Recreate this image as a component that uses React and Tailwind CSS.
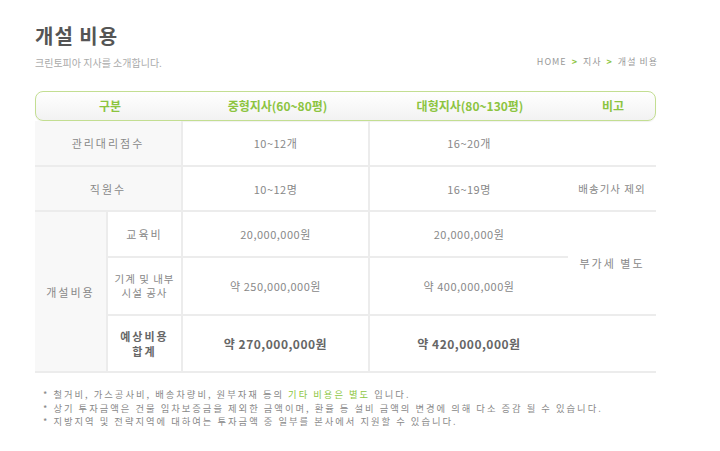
import React from 'react'

const font = { fontFamily: '"Noto Sans CJK KR", "Noto Sans", sans-serif' }

function Cell({ className = '', children }) {
  return (
    <div className={`flex items-center justify-center text-center border-b-2 border-[#ececec] ${className}`}>
      {children}
    </div>
  )
}

export default function App() {
  return (
    <div className="w-[720px] h-[451px] bg-white text-[#888] overflow-hidden" style={font}>
      <div className="pl-[35px] pr-[64px] pt-[23px]">
        <div className="flex items-end justify-between">
          <div>
            <h1 className="text-[20px] leading-[26px] font-bold text-[#555] tracking-[1px]">개설 비용</h1>
            <p className="mt-[7px] text-[10px] leading-[14px] text-[#aaa]">크린토피아 지사를 소개합니다.</p>
          </div>
          <div className="flex items-center gap-[5px] text-[9px] leading-[14px] text-[#999] tracking-[1px] pb-[1px] -mr-[2px]">
            <span>HOME</span>
            <span className="text-[#8dc63f] font-bold">&gt;</span>
            <span>지사</span>
            <span className="text-[#8dc63f] font-bold">&gt;</span>
            <span>개설 비용</span>
          </div>
        </div>

        <div className="mt-[21px] w-[621px]">
          <div className="grid grid-cols-[148px_187px_198px_88px] h-[30px] items-center rounded-[8px] border border-[#c3de92] bg-gradient-to-b from-white to-[#f2f2f2] shadow-[0_1px_1px_rgba(0,0,0,0.06)] text-[12px] font-bold text-[#8cc43f]">
            <div className="text-center">구분</div>
            <div className="text-center">중형지사(60~80평)</div>
            <div className="text-center">대형지사(80~130평)</div>
            <div className="text-center">비고</div>
          </div>

          <div className="grid grid-cols-[73px_75px_187px_198px_88px] grid-rows-[46px_45px_46px_58px_57px] text-[11px] leading-[14px] tracking-[0.5px]">
            <Cell className="col-span-2 bg-[#f8f8f8] border-r-2 border-r-[#ececec] tracking-[2px]">관리대리점수</Cell>
            <Cell className="border-r-2 border-r-[#ececec]">10~12개</Cell>
            <Cell>16~20개</Cell>
            <Cell></Cell>

            <Cell className="col-span-2 bg-[#f8f8f8] border-r-2 border-r-[#ececec] tracking-[2px]">직원수</Cell>
            <Cell className="border-r-2 border-r-[#ececec]">10~12명</Cell>
            <Cell>16~19명</Cell>
            <Cell className="tracking-[1px] text-[10.5px] whitespace-nowrap">배송기사 제외</Cell>

            <Cell className="row-span-3 bg-[#f8f8f8] border-r-2 border-r-[#ececec] tracking-[2px]">개설비용</Cell>
            <Cell className="border-r-2 border-r-[#ececec] tracking-[2px]">교육비</Cell>
            <Cell className="border-r-2 border-r-[#ececec]">20,000,000원</Cell>
            <Cell>20,000,000원</Cell>
            <Cell className="row-span-2 tracking-[2px]">부가세 별도</Cell>

            <Cell className="border-r-2 border-r-[#ececec] tracking-[1px] leading-[14px] text-[10.5px]">기계 및 내부<br />시설 공사</Cell>
            <Cell className="border-r-2 border-r-[#ececec]">약 250,000,000원</Cell>
            <Cell>약 400,000,000원</Cell>

            <Cell className="border-r-2 border-r-[#ececec] tracking-[2px] leading-[15px] font-bold text-[#666]">예상비용<br />합계</Cell>
            <Cell className="border-r-2 border-r-[#ececec] font-bold text-[#666] text-[12px]">약 270,000,000원</Cell>
            <Cell className="font-bold text-[#666] text-[12px]">약 420,000,000원</Cell>
            <Cell></Cell>
          </div>
        </div>

        <div className="mt-[15px] pl-[8px] text-[9.3px] leading-[13.5px] text-[#888] tracking-[2px]">
          <p>* 철거비, 가스공사비, 배송차량비, 원부자재 등의 <span className="text-[#8dc63f]">기타 비용은 별도</span> 입니다.</p>
          <p>* 상기 투자금액은 건물 임차보증금을 제외한 금액이며, 환율 등 설비 금액의 변경에 의해 다소 증감 될 수 있습니다.</p>
          <p>* 지방지역 및 전략지역에 대하여는 투자금액 중 일부를 본사에서 지원할 수 있습니다.</p>
        </div>
      </div>
    </div>
  )
}
